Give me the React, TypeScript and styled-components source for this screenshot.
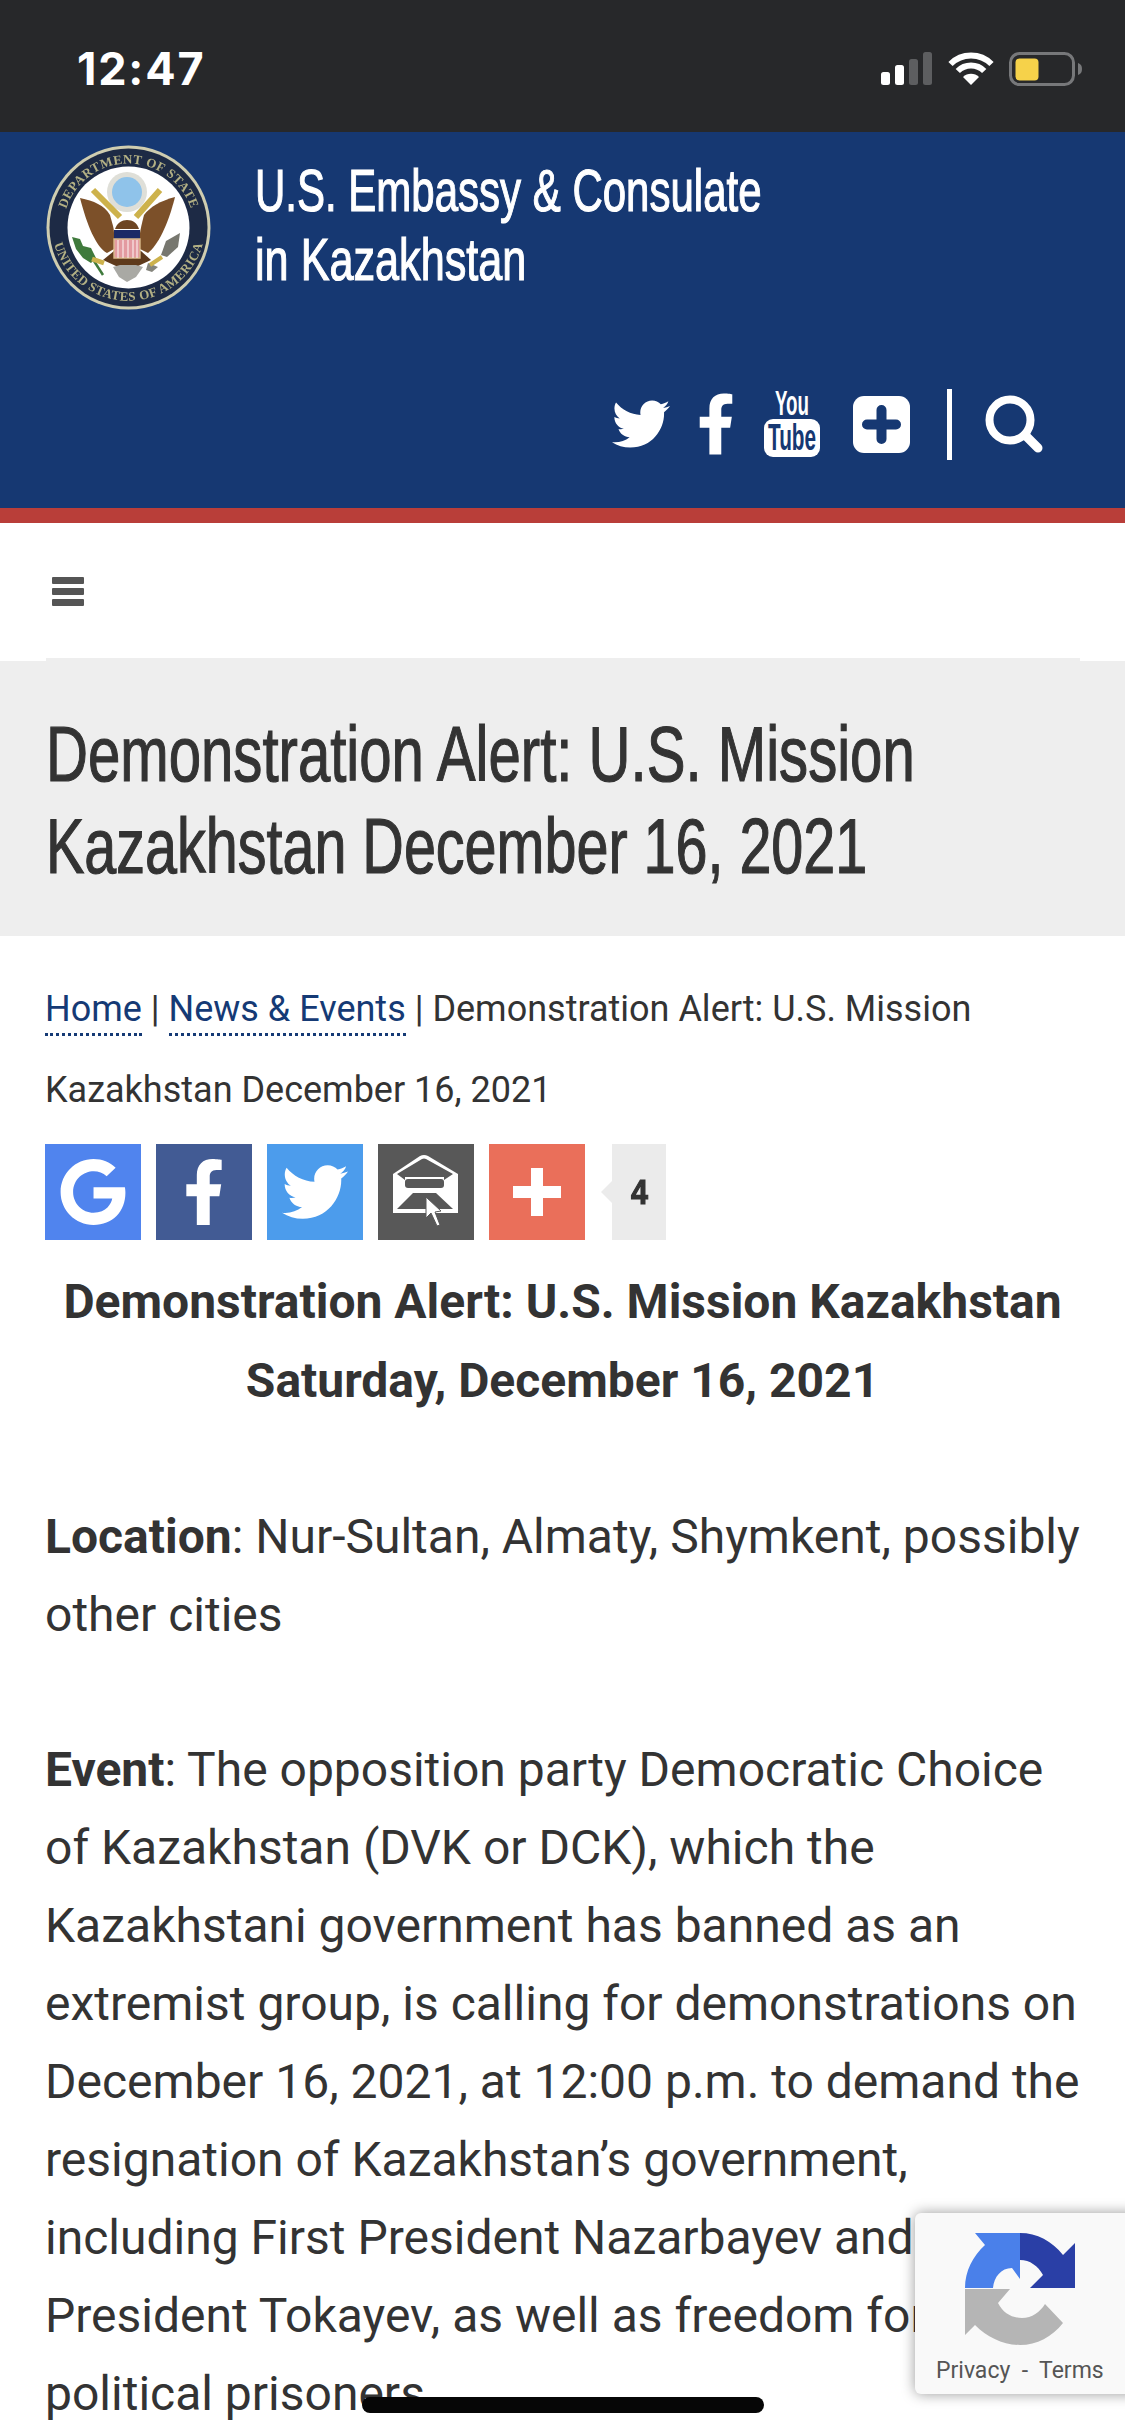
import styled, { createGlobalStyle } from "styled-components"
import { FaTwitter, FaFacebookF, FaGoogle } from "react-icons/fa"

const GlobalStyle = createGlobalStyle`
    html, body {
        margin: 0;
        padding: 0;
        background: #fff;
    }
    * {
        box-sizing: border-box;
    }
`

const Page = styled.div`
    position: relative;
    width: 1125px;
    height: 2436px;
    overflow: hidden;
    font-family: Roboto, "Liberation Sans", sans-serif;
    color: #333;
`

const StatusBar = styled.div`
    height: 132px;
    background: #27282a;
    display: flex;
    align-items: flex-start;
    justify-content: space-between;
    padding: 52px 42px 0 77px;
`

const Clock = styled.div`
    font-family: Inter, "Liberation Sans", sans-serif;
    font-weight: 700;
    font-size: 45px;
    line-height: 34px;
    color: #fff;
    letter-spacing: 1.8px;
`

const StatusIcons = styled.div`
    display: flex;
    align-items: flex-start;
    gap: 15px;
`

const Banner = styled.header`
    height: 391px;
    background: #163872;
    border-bottom: 15px solid #b93e39;
    padding: 13px 0 0 46px;
    display: flex;
    flex-direction: column;
`

const BrandRow = styled.div`
    display: flex;
    align-items: flex-start;
    gap: 44px;
`

const Seal = styled.svg`
    width: 165px;
    height: 165px;
    flex: none;
    filter: blur(0.6px);
`

const BrandName = styled.div`
    padding-top: 11px;
    color: #fff;
    font-family: "Liberation Sans", sans-serif;
    font-size: 60px;
    line-height: 69px;
`

const Condensed = styled.span<{ $squeeze: number }>`
    display: block;
    white-space: nowrap;
    transform-origin: left center;
    transform: scaleX(${(p) => p.$squeeze});
    -webkit-text-stroke: 1.2px currentColor;
`

const IconRow = styled.div`
    display: flex;
    align-items: center;
    margin-top: 78px;
    padding-left: 566px;
    height: 72px;
    color: #fff;
`

const TwitterLink = styled(FaTwitter)`
    width: 58px;
    height: 58px;
`

const FacebookLink = styled(FaFacebookF)`
    width: 38px;
    height: 62px;
    margin-left: 27px;
`

const YoutubeLink = styled.svg`
    width: 56px;
    height: 68px;
    margin-left: 29px;
    overflow: visible;
`

const PlusLink = styled.svg`
    width: 57px;
    height: 57px;
    margin-left: 33px;
`

const Divider = styled.div`
    width: 5px;
    height: 71px;
    background: #fff;
    margin-left: 37px;
`

const SearchLink = styled.svg`
    width: 58px;
    height: 58px;
    margin-left: 33px;
`

const Nav = styled.nav`
    height: 138px;
    margin: 0 45px 0 46px;
    border-bottom: 3px solid #eee;
    padding: 54px 0 0 6px;
`

const Burger = styled.div`
    width: 32px;
    display: flex;
    flex-direction: column;
    gap: 4px;
`

const BurgerBar = styled.span`
    height: 7px;
    border-radius: 1px;
    background: #555;
`

const TitleBand = styled.div`
    height: 275px;
    background: #eee;
    padding: 47px 46px 0;
    font-family: "Liberation Sans", sans-serif;
    font-size: 78px;
    line-height: 92px;
    color: #333;
`

const Content = styled.main`
    padding: 33px 30px 0 45px;
`

const Crumbs = styled.div`
    font-size: 36px;
    line-height: 81px;
    color: #333;
`

const CrumbLink = styled.a`
    color: #153a75;
    border-bottom: 3px dotted #153a75;
    padding-bottom: 3px;
`

const ShareRow = styled.div`
    display: flex;
    align-items: flex-start;
    gap: 15px;
    margin: 13px 0 23px 0;
`

const ShareButton = styled.div<{ $bg: string }>`
    width: 96px;
    height: 96px;
    background: ${(p) => p.$bg};
    color: #fff;
    display: flex;
    align-items: center;
    justify-content: center;
`

const ShareCount = styled.div`
    position: relative;
    width: 54px;
    height: 96px;
    margin-left: 12px;
    padding-left: 19px;
    background: #ebebeb;
    display: flex;
    align-items: center;
    font-family: "Liberation Sans", sans-serif;
    font-size: 35px;
    font-weight: 700;
    color: #333;

    &::before {
        content: "";
        position: absolute;
        left: -11px;
        top: 37px;
        border-style: solid;
        border-width: 11px 11px 11px 0;
        border-color: transparent #ebebeb transparent transparent;
    }
`

const AlertHeading = styled.h2`
    margin: 0 0 77.5px -15px;
    text-align: center;
    font-size: 48px;
    line-height: 78.5px;
    font-weight: 700;
    color: #333;
`

const Paragraph = styled.p`
    margin: 0 0 77px;
    font-size: 48px;
    line-height: 78px;
    color: #333;
`

const RecaptchaBadge = styled.div`
    position: absolute;
    left: 915px;
    top: 2213px;
    width: 230px;
    height: 181px;
    background: #f9f9f9;
    border-radius: 6px;
    box-shadow: 0 0 14px rgba(0, 0, 0, 0.4);
    display: flex;
    flex-direction: column;
    padding: 20px 0 0 21px;
`

const RecaptchaLogo = styled.svg`
    width: 110px;
    height: 112px;
    margin-left: 29px;
    flex: none;
`

const RecaptchaLinks = styled.div`
    margin-top: 12px;
    font-size: 23px;
    line-height: 28px;
    color: #555;
    white-space: pre;
`

const HomeIndicator = styled.div`
    position: absolute;
    left: 362px;
    top: 2397px;
    width: 402px;
    height: 16px;
    border-radius: 8px;
    background: #060606;
`

function SignalIcon() {
    return (
        <svg width="52" height="33" viewBox="0 0 52 33">
            <rect x="0" y="20" width="9" height="13" rx="2.5" fill="#fff" />
            <rect x="14" y="13" width="9" height="20" rx="2.5" fill="#fff" />
            <rect x="28" y="7" width="9" height="26" rx="2.5" fill="#5d5e60" />
            <rect x="42" y="0" width="9" height="33" rx="2.5" fill="#5d5e60" />
        </svg>
    )
}

function WifiIcon() {
    return (
        <svg width="46" height="33" viewBox="0 0 46 33">
            <path d="M23 33 L15 25 A11.5 11.5 0 0 1 31 25 Z" fill="#fff" />
            <path d="M9.8 19 A18.5 18.5 0 0 1 36.2 19" stroke="#fff" strokeWidth="6" fill="none" />
            <path d="M2.5 12 A29 29 0 0 1 43.5 12" stroke="#fff" strokeWidth="6" fill="none" />
        </svg>
    )
}

function BatteryIcon() {
    return (
        <svg width="74" height="34" viewBox="0 0 74 34">
            <rect x="1.5" y="1.5" width="63" height="31" rx="9" fill="none" stroke="#77787a" strokeWidth="3" />
            <rect x="6.5" y="6.5" width="23" height="22" rx="4" fill="#f6d24a" />
            <path d="M69 11 C72 12 73 14 73 17 C73 20 72 22 69 23 Z" fill="#77787a" />
        </svg>
    )
}

function SealArt() {
    return (
        <Seal viewBox="0 0 165 165">
            <defs>
                <path id="sealTop" d="M19 100 A65.5 65.5 0 1 1 146 100" />
                <path id="sealBottom" d="M6 70 A77 77 0 1 0 159 70" />
            </defs>
            <circle cx="82.5" cy="82.5" r="82" fill="#cfcdb0" />
            <circle cx="82.5" cy="82.5" r="79" fill="#1d2a45" />
            <circle cx="82.5" cy="82.5" r="61" fill="#fff" />
            <text fontFamily="Liberation Serif, serif" fontWeight="700" fontSize="13" fill="#b3b084" letterSpacing="0.5">
                <textPath href="#sealTop" startOffset="50%" textAnchor="middle">DEPARTMENT OF STATE</textPath>
            </text>
            <text fontFamily="Liberation Serif, serif" fontWeight="700" fontSize="13" fill="#b3b084" letterSpacing="0.5">
                <textPath href="#sealBottom" startOffset="50%" textAnchor="middle">UNITED STATES OF AMERICA</textPath>
            </text>
            <circle cx="81" cy="47" r="20" fill="#dfdfd8" />
            <circle cx="81" cy="47" r="15" fill="#8fc3ea" />
            <path d="M34 53 C48 56 58 60 64 70 C66 78 68 82 68 88 L68 104 L61 108 C50 102 41 80 34 53 Z" fill="#7c5029" />
            <path d="M129 52 C114 56 104 62 98 70 C96 78 95 82 94 88 L94 104 L102 108 C112 100 122 80 129 52 Z" fill="#7c5029" />
            <path d="M69 84 C71 78 76 75 81 75 C87 75 91 78 93 84 Z" fill="#6d4522" />
            <path d="M47 45 L74 72 M114 45 L90 72" stroke="#cdb24c" strokeWidth="6" />
            <path d="M57 115 L68 106 L95 106 L105 115 L92 121 L70 121 Z" fill="#5e3a1c" />
            <path d="M67 122 L74 120 L90 120 L97 122 L90 132 L81 137 L73 132 Z" fill="#a9a9a4" />
            <rect x="68" y="85" width="26" height="9" fill="#1b2a66" />
            <path d="M68 94 H94 V113 H68 Z" fill="#e39aa0" stroke="#d9b98a" strokeWidth="1.4" />
            <path d="M72 95 V113 M77 95 V113 M82 95 V113 M87 95 V113 M91 95 V113" stroke="#f6dcdc" strokeWidth="1.4" />
            <path d="M26 92 L34 94 L37 101 L45 103 L50 113 L45 118 L37 113 L30 104 Z" fill="#3f7a3c" />
            <path d="M48 116 L57 130" stroke="#3f7a3c" strokeWidth="2.5" />
            <path d="M46 114 L58 118" stroke="#cdb24c" strokeWidth="5" />
            <path d="M120 96 L134 88 L132 102 L121 112 L115 110 Z" fill="#77776f" />
            <path d="M102 118 L112 122 L106 127 L100 125 Z" fill="#85857d" />
            <path d="M104 120 L116 112" stroke="#cdb24c" strokeWidth="4" />
        </Seal>
    )
}

function App() {
    return (
        <Page>
            <GlobalStyle />
            <StatusBar>
                <Clock>12:47</Clock>
                <StatusIcons>
                    <SignalIcon />
                    <WifiIcon />
                    <BatteryIcon />
                </StatusIcons>
            </StatusBar>

            <Banner>
                <BrandRow>
                    <SealArt />
                    <BrandName>
                        <Condensed $squeeze={0.7}>U.S. Embassy &amp; Consulate</Condensed>
                        <Condensed $squeeze={0.72}>in Kazakhstan</Condensed>
                    </BrandName>
                </BrandRow>
                <IconRow>
                    <TwitterLink />
                    <FacebookLink />
                    <YoutubeLink viewBox="0 0 56 68">
                        <text x="28" y="25" textAnchor="middle" fontFamily="Liberation Sans, sans-serif" fontSize="35" fontWeight="700" fill="#fff" textLength="34" lengthAdjust="spacingAndGlyphs">You</text>
                        <rect x="0" y="29" width="56" height="38" rx="9" fill="#fff" />
                        <text x="28" y="60" textAnchor="middle" fontFamily="Liberation Sans, sans-serif" fontSize="36" fontWeight="700" fill="#163872" textLength="48" lengthAdjust="spacingAndGlyphs">Tube</text>
                    </YoutubeLink>
                    <PlusLink viewBox="0 0 57 57">
                        <rect width="57" height="57" rx="11" fill="#fff" />
                        <path d="M28.5 14 V43 M14 28.5 H43" stroke="#163872" strokeWidth="10" strokeLinecap="round" />
                    </PlusLink>
                    <Divider />
                    <SearchLink viewBox="0 0 58 58">
                        <circle cx="25" cy="25" r="20.5" fill="none" stroke="#fff" strokeWidth="8" />
                        <path d="M40 40 L53 53" stroke="#fff" strokeWidth="9" strokeLinecap="round" />
                    </SearchLink>
                </IconRow>
            </Banner>

            <Nav>
                <Burger>
                    <BurgerBar />
                    <BurgerBar />
                    <BurgerBar />
                </Burger>
            </Nav>

            <TitleBand>
                <Condensed $squeeze={0.745}>Demonstration Alert: U.S. Mission</Condensed>
                <Condensed $squeeze={0.737}>Kazakhstan December 16, 2021</Condensed>
            </TitleBand>

            <Content>
                <Crumbs>
                    <CrumbLink>Home</CrumbLink> | <CrumbLink>News &amp; Events</CrumbLink> | Demonstration Alert: U.S. Mission Kazakhstan December 16, 2021
                </Crumbs>

                <ShareRow>
                    <ShareButton $bg="#5084ee"><FaGoogle size={68} /></ShareButton>
                    <ShareButton $bg="#425b94"><FaFacebookF size={66} /></ShareButton>
                    <ShareButton $bg="#4c9cec"><FaTwitter size={66} /></ShareButton>
                    <ShareButton $bg="#585858">
                        <svg width="96" height="96" viewBox="0 0 96 96">
                            <path d="M15 30 L42 12 Q46 10 50 12 L80 30 V69 H15 Z" fill="#fff" />
                            <path d="M19 30 L44 15 Q46 14 48 15 L75 30 L66 36 V33 H27 V36 Z" fill="#585858" />
                            <rect x="27" y="35" width="39" height="9" rx="3" fill="#585858" />
                            <path d="M35 49 H58 L75 65 H19 Z" fill="#585858" />
                            <path d="M48 53 L48 74 L53 69 L59 82 L62 81 L57 68 L63 67 Z" fill="#fff" stroke="#585858" strokeWidth="1" />
                        </svg>
                    </ShareButton>
                    <ShareButton $bg="#ea6f5a">
                        <svg width="96" height="96" viewBox="0 0 96 96">
                            <path d="M48 24 V72 M24 48 H72" stroke="#fff" strokeWidth="12" />
                        </svg>
                    </ShareButton>
                    <ShareCount><Condensed $squeeze={0.87}>4</Condensed></ShareCount>
                </ShareRow>

                <AlertHeading>
                    Demonstration Alert: U.S. Mission Kazakhstan
                    <br />
                    Saturday, December 16, 2021
                </AlertHeading>

                <Paragraph>
                    <strong>Location</strong>: Nur-Sultan, Almaty, Shymkent, possibly other cities
                </Paragraph>

                <Paragraph>
                    <strong>Event</strong>: The opposition party Democratic Choice of Kazakhstan (DVK or DCK), which the Kazakhstani government has banned as an extremist group, is calling for demonstrations on December 16, 2021, at 12:00 p.m. to demand the resignation of Kazakhstan’s government, including First President Nazarbayev and President Tokayev, as well as freedom for political prisoners
                </Paragraph>
            </Content>

            <RecaptchaBadge>
                <RecaptchaLogo viewBox="0 0 110 112">
                    <path d="M10 0 H55 V46 L47 35 C36 35 29 44 28 55 H0 C0 38 8 23 20 12 Z" fill="#4a80ea" />
                    <path d="M55 0 C72 0 87 8 98 22 L110 10 V55 H65 L78 42 C73 33 65 27 55 27 Z" fill="#2a3fa6" />
                    <path d="M0 56 H45 L33 70 C38 80 47 85 57 85 C67 85 75 79 80 71 L98 90 C87 104 72 112 55 112 C38 112 22 104 10 92 L0 102 Z" fill="#b5b5b5" />
                </RecaptchaLogo>
                <RecaptchaLinks>Privacy  -  Terms</RecaptchaLinks>
            </RecaptchaBadge>

            <HomeIndicator />
        </Page>
    )
}

export default App
